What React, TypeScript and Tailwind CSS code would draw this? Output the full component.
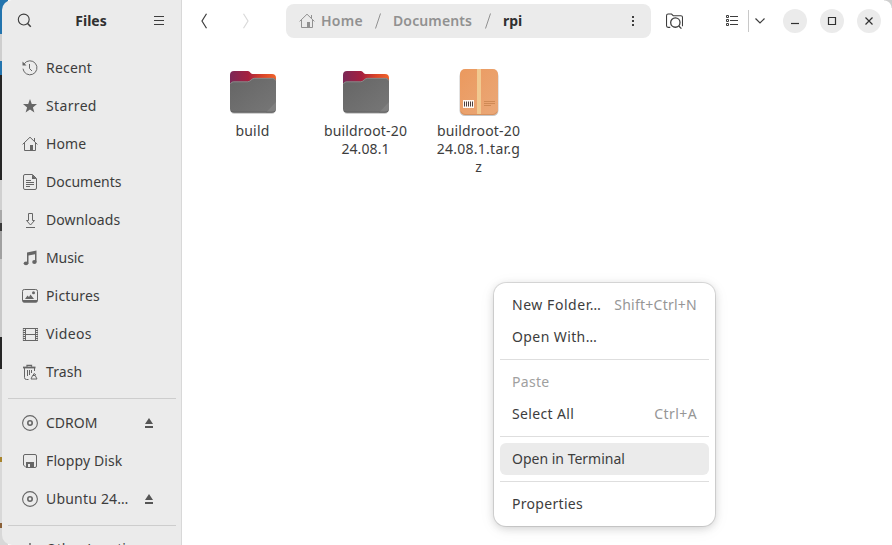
import type { ReactNode } from "react";

type IconProps = { children: ReactNode; className?: string; size?: number };

function Icon({ children, className = "text-[#666]", size = 16 }: IconProps) {
  return (
    <svg
      width={size}
      height={size}
      viewBox="0 0 16 16"
      fill="none"
      stroke="currentColor"
      strokeWidth="1"
      className={`shrink-0 ${className}`}
    >
      {children}
    </svg>
  );
}

const homeShape = (
  <>
    <path d="M.6 8.4 8 1.2l7.4 7.2M2.5 7v7.5h11V7M12.5 2v3.3" />
    <path d="M8 9h3v5.5H8z" fill="currentColor" stroke="none" />
  </>
);

const discShape = (
  <>
    <circle cx="8" cy="8" r="7.4" strokeWidth="1.1" />
    <circle cx="8" cy="8" r="2.2" strokeWidth="1.6" />
  </>
);

const places: { label: string; icon: ReactNode; tracking: string }[] = [
  {
    label: "Recent",
    tracking: "tracking-[0.2px]",
    icon: (
      <>
        <path d="M2.2 3.8A7 7 0 1 1 1 8.7" />
        <path d="M7.5 4v4.5l2.5 2.5" />
        <path d="M.5 1.5v4h4z" fill="currentColor" stroke="none" />
      </>
    ),
  },
  {
    label: "Starred",
    tracking: "tracking-[0.35px]",
    icon: (
      <path
        d="m8 1 1.8 4.9 5.2.2-4.1 3.3 1.5 5.1L8 11.6l-4.4 2.9 1.5-5.1L1 6.1l5.2-.2z"
        fill="currentColor"
        stroke="none"
      />
    ),
  },
  { label: "Home", tracking: "tracking-[0.1px]", icon: homeShape },
  {
    label: "Documents",
    tracking: "tracking-[0px]",
    icon: (
      <>
        <path d="M3 .5h7.5l4 4V14a1.5 1.5 0 0 1-1.5 1.5H3A1.5 1.5 0 0 1 1.5 14V2A1.5 1.5 0 0 1 3 .5Z" />
        <path d="M10 .5V5h4.5z" fill="currentColor" stroke="none" />
        <path d="M4 6.5h5M4 8.5h8M4 10.5h8M4 12.5h4" />
      </>
    ),
  },
  {
    label: "Downloads",
    tracking: "tracking-[0.1px]",
    icon: <path d="M6.5 1.500h4v7h2L8.500 13l-4-4.500h2zM4 15.500h9" />,
  },
  {
    label: "Music",
    tracking: "tracking-[-0.1px]",
    icon: (
      <g fill="currentColor" stroke="none">
        <path d="M5 2.500 14.500.5v11.700h-1.500V4.200l-6.500 1.300v8H5z" />
        <ellipse cx="4" cy="13.300" rx="2.300" ry="1.900" />
        <ellipse cx="12.400" cy="12" rx="2.200" ry="1.900" />
      </g>
    ),
  },
  {
    label: "Pictures",
    tracking: "tracking-[0.15px]",
    icon: (
      <>
        <rect x=".5" y="1.500" width="15" height="12.500" rx="1.800" />
        <path d="M.5 12h15v1a1.500 1.500 0 0 1-1.500 1.500H2A1.500 1.500 0 0 1 .5 13z" fill="currentColor" stroke="none" />
        <path d="m3 11 2.500-3.500L7 9l1.500-2.500L12 11z" fill="currentColor" stroke="none" />
        <circle cx="11.500" cy="4.800" r="1.500" fill="currentColor" stroke="none" />
      </>
    ),
  },
  {
    label: "Videos",
    tracking: "tracking-[0.35px]",
    icon: (
      <>
        <path d="M3.500 2v13M13.500 2v13M3.500 2.500h10M3.500 8.500h10M3.500 14.500h10" />
        <path d="M2 2v13M15 2v13" strokeWidth="2" strokeDasharray="1 1" />
        <path d="M1.300 2v13M15.700 2v13" strokeWidth=".6" />
      </>
    ),
  },
  {
    label: "Trash",
    tracking: "tracking-[0.1px]",
    icon: (
      <>
        <path d="M1 3.500h12.500" strokeWidth="1.800" />
        <path d="M5 2.700V1.300h4.500v1.400" strokeWidth="1.300" />
        <path d="M2.500 4v9.500a2 2 0 0 0 2 2h2M12.500 4v3M5.500 6v6M7.500 6v5M9.500 6v3" />
        <path d="M9 15h6l-1.800-3.500h-2.600zM11 11.500l1-2 2 1.500" />
      </>
    ),
  },
];

const devices: { label: string; icon: ReactNode; ejectable: boolean; tracking: string }[] = [
  { label: "CDROM", icon: discShape, ejectable: true, tracking: "tracking-[0px]" },
  {
    label: "Floppy Disk",
    ejectable: false,
    tracking: "tracking-[0.12px]",
    icon: (
      <>
        <path d="M3 1.500h10A1.500 1.500 0 0 1 14.500 3v10a1.500 1.500 0 0 1-1.500 1.500H4L1.500 12V3A1.500 1.500 0 0 1 3 1.500Z" />
        <path d="M4 9h8v6H4zM6 11v3h2v-3z" fill="currentColor" fillRule="evenodd" stroke="none" />
      </>
    ),
  },
  { label: "Ubuntu 24…", icon: discShape, ejectable: true, tracking: "tracking-[0.2px]" },
];

function SidebarRow({ label, icon, tracking, ejectable = false }: { label: string; icon: ReactNode; tracking: string; ejectable?: boolean }) {
  return (
    <div className="flex h-[38px] shrink-0 items-center pl-5 pr-[26px]">
      <Icon>{icon}</Icon>
      <span className={`ml-2 flex-1 whitespace-nowrap pb-0.5 ${tracking}`}>{label}</span>
      {ejectable && (
        <svg width="10" height="10" viewBox="0 0 10 10" fill="#555" className="mr-px">
          <path d="M5 0 9 6H1zM1 8h8v2H1z" />
        </svg>
      )}
    </div>
  );
}

function Folder({ id }: { id: string }) {
  return (
    <svg width="48" height="48" viewBox="0 0 48 48">
      <defs>
        <linearGradient id={id} x1="0" x2="1" y1="0" y2="0">
          <stop offset="0" stopColor="#7b2857" />
          <stop offset=".4" stopColor="#a5203f" />
          <stop offset=".7" stopColor="#d94328" />
          <stop offset="1" stopColor="#f0642b" />
        </linearGradient>
        <linearGradient id={`${id}-front`} x1="0" x2="1" y1="0" y2="1">
          <stop offset="0" stopColor="#656565" />
          <stop offset="1" stopColor="#777" />
        </linearGradient>
      </defs>
      <rect x="1" y="8" width="46" height="38" rx="4.500" fill="#000" opacity=".18" />
      <path d="M1 7a4 4 0 0 1 4-4h14c2 0 2.500 3 4.500 3H43a4 4 0 0 1 4 4v20H1z" fill={`url(#${id})`} />
      <path
        d="M1 17a3.500 3.500 0 0 1 3.500-3.500h14c3 0 4-3.500 7-3.500h18a3.500 3.500 0 0 1 3.500 3.500V40.500a4 4 0 0 1-4 4H5a4 4 0 0 1-4-4z"
        fill={`url(#${id}-front)`}
      />
      <path d="M1.400 16a3.500 3.500 0 0 1 3.100-2.200h14c3 0 4-3.500 7-3.500h18a3.500 3.500 0 0 1 3.100 2.200" fill="none" stroke="#929292" strokeWidth=".8" />
      <path d="M47 34v6.500a4 4 0 0 1-4 4h-6z" fill="#808080" />
      <path d="M2 43q1 1.200 3 1.200h38q2 0 3-1.200" fill="none" stroke="#505050" strokeWidth=".7" />
    </svg>
  );
}

function Archive() {
  return (
    <svg width="48" height="48" viewBox="0 0 48 48">
      <defs>
        <linearGradient id="box" x1="0" x2="1" y1="0" y2="1">
          <stop offset="0" stopColor="#eb995e" />
          <stop offset="1" stopColor="#eaa878" />
        </linearGradient>
      </defs>
      <rect x="4.500" y="2.500" width="39" height="45.500" rx="5.500" fill="#000" opacity=".22" />
      <rect x="5" y="1" width="38" height="46" rx="5" fill="url(#box)" />
      <path d="M6 43.500q1 3 4 3h28q3 0 4-3" fill="none" stroke="#d28c59" strokeWidth=".8" />
      <path d="M22 1h4v45h-4z" fill="#f1c990" />
      <rect x="8" y="32" width="11" height="8" fill="#fff7f0" />
      <path d="M9.500 33.500v5M11.500 33.500v5M13.500 33.500v5M15.500 33.500v5M17.500 33.500v5" stroke="#4c4040" strokeWidth="1" />
      <path d="M29 33.500h11M29 35.500h11M29 37.500h7" stroke="#cf8a55" strokeWidth="1" />
    </svg>
  );
}

function FileItem({ icon, lines, tracking }: { icon: ReactNode; lines: string[]; tracking: string[] }) {
  return (
    <div className="flex w-[113px] flex-col items-center">
      {icon}
      <div className="mt-[6px] text-center leading-[18px]">
        {lines.map((line, i) => (
          <div key={line} className={`whitespace-nowrap ${tracking[i]}`}>
            {line}
          </div>
        ))}
      </div>
    </div>
  );
}

type MenuItemProps = { label: string; shortcut?: string; tracking: string; shortcutTracking?: string; className?: string };

function MenuItem({ label, shortcut, tracking, shortcutTracking = "", className = "" }: MenuItemProps) {
  return (
    <div className={`flex h-8 items-center justify-between whitespace-nowrap rounded-md px-3 pb-0.5 ${className}`}>
      <span className={tracking}>{label}</span>
      {shortcut && <span className={`text-[#969696] ${shortcutTracking}`}>{shortcut}</span>}
    </div>
  );
}

const Divider = () => <div className="my-[6px] h-px bg-[#dedede]" />;

export default function App() {
  return (
    <div className="relative flex h-[545px] w-[892px] overflow-hidden bg-white font-['Noto_Sans',sans-serif] text-[14px] text-[#3d3d3d]">
      <div className="flex w-2 shrink-0 flex-col">
        <div className="h-[34px] bg-[#2374ae]" />
        <div className="h-[27px] bg-[#cecece]" />
        <div className="h-[14px] bg-[#2374ae]" />
        <div className="h-[105px] bg-[#252525]" />
        <div className="h-[30px] bg-[#d0d0d0]" />
        <div className="h-[13px] bg-[#a8a8a8]" />
        <div className="h-2 bg-[#3a3a3a]" />
        <div className="h-[28px] bg-[#a0a0a0]" />
        <div className="h-[78px] bg-[#c8c8c8]" />
        <div className="h-8 bg-[#252525]" />
        <div className="h-[88px] bg-[#d8d8d8]" />
        <div className="h-[5px] bg-[#a8842c]" />
        <div className="h-[61px] bg-[#d8d8d8]" />
        <div className="h-[5px] bg-[#8a6038]" />
        <div className="h-[17px] bg-[#d8d8d8]" />
      </div>

      <aside className="-ml-1.5 flex w-[180px] shrink-0 flex-col overflow-hidden rounded-l-[10px] border-r border-[#d8d8d8] bg-[#ebebeb]">
        <header className="flex h-[49px] shrink-0 items-center justify-between pb-[8px] pl-[15px] pr-[15px]">
          <Icon className="text-[#3d3d3d]" size={15}>
            <circle cx="7.200" cy="7" r="5.800" strokeWidth="1.200" />
            <path d="m11.300 11.300 3.400 3.400" strokeWidth="1.600" />
          </Icon>
          <span className="-ml-[3px] text-[14px] font-bold text-[#303030]">Files</span>
          <svg width="12" height="12" viewBox="0 0 12 12" stroke="#3d3d3d" className="mr-px">
            <path d="M1 1.500h10M1 5.500h10M1 9.500h10" />
          </svg>
        </header>
        {places.map((place) => (
          <SidebarRow key={place.label} {...place} />
        ))}
        <div className="mb-[5px] ml-1.5 mr-[5px] mt-[7px] h-px shrink-0 bg-[#cdcdcd]" />
        {devices.map((device) => (
          <SidebarRow key={device.label} {...device} />
        ))}
        <div className="mb-[4px] ml-1.5 mr-[5px] mt-[7px] h-px shrink-0 bg-[#cdcdcd]" />
        <SidebarRow label="Other Locations" tracking="tracking-[-0.1px]" icon={<path d="M8 2v12M2 8h12" strokeWidth="1.500" />} />
      </aside>

      <main className="flex flex-1 flex-col">
        <header className="flex h-[42px] shrink-0 items-center">
          <Icon className="ml-[14px] text-[#3d3d3d]">
            <path d="m10.500.7-4.500 7.300 4.500 7.300" strokeWidth="1.200" />
          </Icon>
          <Icon className="ml-[26px] text-[#dadada]">
            <path d="m5.500.7 4.500 7.300-4.500 7.300" strokeWidth="1.200" />
          </Icon>
          <div className="ml-8 flex h-[34px] w-[365px] items-center rounded-lg bg-[#ebebeb] pl-[13px] text-[14px] font-semibold text-[#919191]">
            <Icon className="text-[#919191]">{homeShape}</Icon>
            <span className="ml-[6px] w-[42px] whitespace-nowrap pb-0.5 tracking-[0.25px]">Home</span>
            <svg width="6" height="16" viewBox="0 0 6 16" stroke="#919191" className="ml-[12px]">
              <path d="M5.500.5.5 15.500" />
            </svg>
            <span className="ml-[12px] w-[80px] whitespace-nowrap pb-0.5 tracking-[0.12px]">Documents</span>
            <svg width="6" height="16" viewBox="0 0 6 16" stroke="#919191" className="ml-[12px]">
              <path d="M5.500.5.5 15.500" />
            </svg>
            <span className="ml-3 flex-1 pb-0.5 font-bold tracking-[-0.1px] text-[#303030]">rpi</span>
            <svg width="4" height="12" viewBox="0 0 4 12" fill="#3d3d3d" className="mr-4">
              <path d="M1 1h2v2H1zM1 5h2v2H1zM1 9h2v2H1z" />
            </svg>
          </div>
          <Icon className="ml-[15px] text-[#3d3d3d]" size={17}>
            <path d="M4 13.500H2A1.500 1.500 0 0 1 .5 12V2.500A1.500 1.500 0 0 1 2 1h3.200l1.600 1.500H14a1.500 1.500 0 0 1 1.500 1.500v8.500" />
            <circle cx="8.800" cy="9" r="4.400" strokeWidth="1.200" />
            <path d="m12 12.200 2.500 2.500" strokeWidth="1.200" />
          </Icon>
          <svg width="13" height="12" viewBox="0 0 13 12" stroke="#3d3d3d" fill="none" className="ml-[43px]">
            <path d="M.5.5h2v2h-2zM.5 4.500h2v2h-2zM.5 8.500h2v2h-2zM4 1.500h8M4 5.500h8M4 9.500h8" />
          </svg>
          <div className="ml-[9px] h-[22px] w-px bg-[#c8c8c8]" />
          <svg width="10" height="6" viewBox="0 0 10 6" stroke="#3d3d3d" fill="none" className="ml-[6px]">
            <path d="m.5.5 4.500 4.500L9.500.5" strokeWidth="1.200" />
          </svg>
          <div className="ml-[18px] flex gap-[13px]">
            {["M4 10.500h8", "M4.500 4.500h7v7h-7z", "m4.500 4.500 7 7m0-7-7 7"].map((d) => (
              <div key={d} className="flex size-6 items-center justify-center rounded-full bg-[#ebebeb]">
                <Icon className="text-[#303030]">
                  <path d={d} strokeWidth="1.200" />
                </Icon>
              </div>
            ))}
          </div>
        </header>

        <section className="flex pl-[14px] pt-[26px]">
          <FileItem icon={<Folder id="folder-a" />} lines={["build"]} tracking={["tracking-[0.2px]"]} />
          <FileItem icon={<Folder id="folder-b" />} lines={["buildroot-20", "24.08.1"]} tracking={["tracking-[0.17px]", "tracking-[0.1px]"]} />
          <FileItem
            icon={<Archive />}
            lines={["buildroot-20", "24.08.1.tar.g", "z"]}
            tracking={["tracking-[0.17px]", "tracking-[0.25px]", "tracking-[0px]"]}
          />
        </section>
      </main>

      <div className="absolute right-0 top-0 h-2 w-2 bg-[radial-gradient(circle_at_0_100%,transparent_7px,#cfcfcf_8px)]" />

      <div className="absolute left-[494px] top-[283px] h-[243px] w-[221px] rounded-xl bg-white p-[6px] shadow-[0_0_0_1px_rgba(0,0,0,0.11),0_2px_8px_rgba(0,0,0,0.16),0_3px_18px_rgba(0,0,0,0.06)]">
        <MenuItem label="New Folder…" shortcut="Shift+Ctrl+N" tracking="tracking-[0.55px]" shortcutTracking="tracking-[0.25px]" />
        <MenuItem label="Open With…" tracking="tracking-[0.4px]" />
        <Divider />
        <MenuItem label="Paste" tracking="tracking-[0.3px]" className="text-[#a0a0a0]" />
        <MenuItem label="Select All" shortcut="Ctrl+A" tracking="tracking-[0.35px]" shortcutTracking="tracking-[0.4px]" />
        <Divider />
        <MenuItem label="Open in Terminal" tracking="tracking-[0px]" className="bg-[#ebebeb]" />
        <Divider />
        <MenuItem label="Properties" tracking="tracking-[0.3px]" />
      </div>
    </div>
  );
}
